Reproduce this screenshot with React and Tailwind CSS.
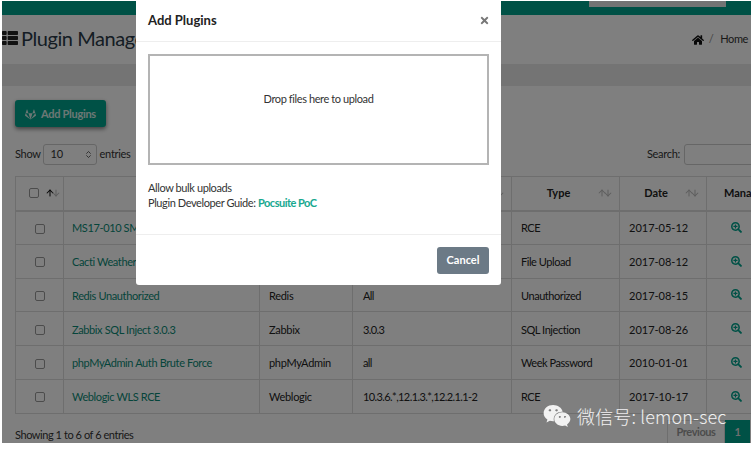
import React from "react";
import { FaThList, FaHome, FaSearchPlus, FaGitlab, FaWeixin, FaTimes } from "react-icons/fa";
import { ArrowUp, ArrowDown, ChevronsUpDown } from "lucide-react";

const rows = [
  ["MS17-010 SMB RCE", "Windows", "Windows 7", "RCE", "2017-05-12"],
  ["Cacti Weathermap File Upload", "Cacti", "0.9.8", "File Upload", "2017-08-12"],
  ["Redis Unauthorized", "Redis", "All", "Unauthorized", "2017-08-15"],
  ["Zabbix SQL Inject 3.0.3", "Zabbix", "3.0.3", "SQL Injection", "2017-08-26"],
  ["phpMyAdmin Auth Brute Force", "phpMyAdmin", "all", "Week Password", "2010-01-01"],
  ["Weblogic WLS RCE", "Weblogic", "10.3.6.*,12.1.3.*,12.2.1.1-2", "RCE", "2017-10-17"],
];

function SortIcon({ active }) {
  return (
    <span className="flex shrink-0 text-[#bdbdbd]">
      <ArrowUp size={10} strokeWidth={2.5} className={active ? "text-[#111]" : ""} />
      <ArrowDown size={10} strokeWidth={2.5} className="-ml-[4px]" />
    </span>
  );
}

function HeadCell({ label }) {
  return (
    <th className="border border-[#dcdcdc] border-b-2 pl-[8px] pr-[6px] font-bold text-[#222]">
      <div className="flex items-center justify-between">
        <span className="flex-1 text-center">{label}</span>
        <SortIcon />
      </div>
    </th>
  );
}

export default function App() {
  return (
    <div className="relative w-[751px] h-[450px] overflow-hidden bg-white font-['Lato','Liberation_Sans',sans-serif] text-[11px] text-[#333]">
      {/* page behind the modal */}
      <div className="ml-[2px] mt-[1px] h-[442px] overflow-hidden bg-white">
        <div className="h-[14px] bg-[#00a38d] relative">
          <div className="absolute left-[587px] top-0 w-[137px] h-[6px] bg-[#e8e8e8]" />
        </div>

        <div className="flex items-center justify-between h-[49px] pr-[3px]">
          <h1 className="flex items-center gap-[3px] -mt-[4px] text-[20px] tracking-[-0.45px] text-[#2b3a48] whitespace-nowrap">
            <FaThList size={16} className="text-[#222]" />
            Plugin Management
          </h1>
          <div className="flex items-center gap-[5px] text-[#333] tracking-[-0.4px]">
            <FaHome size={12} className="text-[#111]" />
            <span className="text-[#888]">/</span>
            <span className="ml-[2px]">Home</span>
          </div>
        </div>

        <div className="h-[22px] bg-[#e9e9e9]" />

        <div className="pl-[13px] pt-[14px] w-[763px]">
          <button className="flex items-center gap-[5px] w-[91px] h-[27px] justify-center rounded-[3px] bg-[#00a38d] pt-[1px] text-[#d8efe9] font-bold tracking-[-0.3px] shadow-[0_2px_4px_rgba(0,0,0,0.5)]">
            <FaGitlab size={11} />
            Add Plugins
          </button>

          <div className="flex items-center mt-[17px] h-[21px] text-[11px] tracking-[-0.3px]">
            <span>Show</span>
            <div className="ml-[2px] shrink-0 flex items-center justify-between w-[54px] h-[21px] rounded-[3px] border border-[#ccc] pl-[7px] pr-[3px]">
              <span>10</span>
              <ChevronsUpDown size={9} className="text-[#333]" />
            </div>
            <span className="ml-[3px]">entries</span>
            <span className="ml-auto">Search:</span>
            <div className="ml-[4px] w-[81px] h-[21px] rounded-[3px] border border-[#ccc] shrink-0" />
          </div>

          <table className="mt-[11px] table-fixed border-collapse w-[748px]">
            <colgroup>
              <col className="w-[48px]" />
              <col className="w-[196px]" />
              <col className="w-[93px]" />
              <col className="w-[159px]" />
              <col className="w-[108px]" />
              <col className="w-[87px]" />
              <col className="w-[57px]" />
            </colgroup>
            <thead>
              <tr className="h-[34px]">
                <th className="border border-[#dcdcdc] border-b-2">
                  <div className="flex items-center pl-[13px] gap-[6px]">
                    <span className="block w-[10px] h-[10px] rounded-[2px] border border-[#999]" />
                    <SortIcon active />
                  </div>
                </th>
                <HeadCell label="Name" />
                <HeadCell label="App" />
                <HeadCell label="Version" />
                <HeadCell label="Type" />
                <HeadCell label="Date" />
                <th className="border border-[#dcdcdc] border-b-2 pl-[17px] text-left font-bold text-[#222] whitespace-nowrap">Manage</th>
              </tr>
            </thead>
            <tbody>
              {rows.map((r) => (
                <tr key={r[0]} className="h-[33.8px]">
                  <td className="border border-[#dcdcdc] text-center">
                    <span className="inline-block align-middle w-[10px] h-[10px] rounded-[2px] border border-[#999]" />
                  </td>
                  <td className="border border-[#dcdcdc] px-[8px] pt-[2px] tracking-[-0.38px] text-[#0a8a76]">{r[0]}</td>
                  <td className="border border-[#dcdcdc] px-[9px] pt-[2px] tracking-[-0.3px] text-[#222]">{r[1]}</td>
                  <td className="border border-[#dcdcdc] px-[10px] pt-[2px] tracking-[-0.6px] text-[#222] whitespace-nowrap">{r[2]}</td>
                  <td className="border border-[#dcdcdc] px-[9px] pt-[2px] tracking-[-0.45px] text-[#222]">{r[3]}</td>
                  <td className="border border-[#dcdcdc] px-[9px] pt-[2px] text-[#222]">{r[4]}</td>
                  <td className="border border-[#dcdcdc] pl-[24px] text-[#00a38d]"><FaSearchPlus size={11} /></td>
                </tr>
              ))}
            </tbody>
          </table>

          <div className="flex justify-between mt-[12px] w-[735px] tracking-[-0.44px]">
            <span className="mt-[1px]">Showing 1 to 6 of 6 entries</span>
            <div className="flex -mt-[6px] h-[24px]">
              <span className="w-[58px] flex items-center justify-center border border-[#ddd] text-[#999] font-bold">Previous</span>
              <span className="w-[25px] flex items-center justify-center bg-[#00a38d] text-[#ddd] font-bold">1</span>
            </div>
          </div>
        </div>
      </div>

      {/* backdrop */}
      <div className="absolute left-[2px] top-[1px] right-0 h-[442px] bg-black/50" />

      {/* modal */}
      <div className="absolute left-[136px] top-0 w-[365px] h-[285px] rounded-b-[3px] bg-white flex flex-col">
        <div className="flex items-center justify-between h-[42px] pl-[12px] pr-[11px] border-b border-[#eee]">
          <h2 className="text-[13px] font-bold text-[#222]">Add Plugins</h2>
          <FaTimes size={11} className="text-[#777]" />
        </div>
        <div className="flex-1 px-[12px] pt-[12px]">
          <div className="h-[111px] flex items-center justify-center pb-[20px] border-2 border-[#b4b4b4] tracking-[-0.4px] text-[#333]">
            Drop files here to upload
          </div>
          <p className="mt-[15px] leading-[15px] tracking-[-0.4px] text-[#333]">
            Allow bulk uploads
            <br />
            Plugin Developer Guide: <a className="font-bold tracking-[-0.5px] text-[#18a88f]">Pocsuite PoC</a>
          </p>
        </div>
        <div className="flex justify-end items-center h-[51px] px-[12px] border-t border-[#eee]">
          <button className="w-[52px] h-[27px] rounded-[3px] bg-[#6c7a86] text-white font-bold">Cancel</button>
        </div>
      </div>

      {/* watermark */}
      <div className="absolute left-[543px] top-[402px] flex items-center gap-[6px] text-white/90 whitespace-nowrap">
        <FaWeixin size={28} />
        <span className="text-[18px] tracking-[0.15px] font-['Noto_Sans_CJK_SC','Noto_Sans',sans-serif] font-light">微信号: lemon-sec</span>
      </div>
    </div>
  );
}
